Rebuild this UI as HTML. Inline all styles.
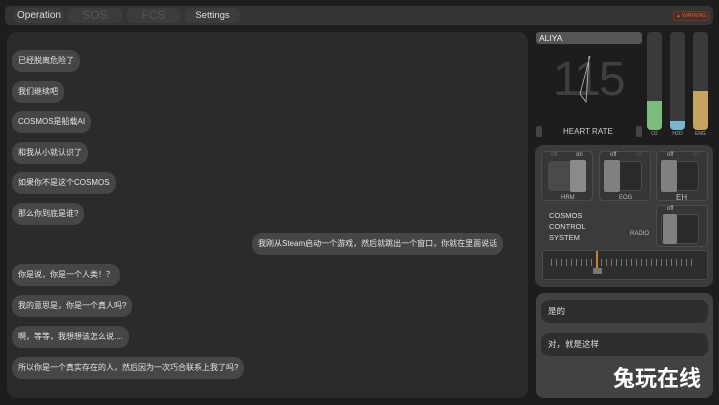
<!DOCTYPE html>
<html><head><meta charset="utf-8"><style>
*{margin:0;padding:0;box-sizing:border-box}
body{width:719px;height:405px;background:#1d1d1d;position:relative;overflow:hidden;font-family:"Liberation Sans","Noto Sans CJK SC",sans-serif;color:#ddd}
.a{position:absolute}
.tab{position:absolute;top:8px;height:15px;border-radius:5px;background:#3c3c3c;font-size:10px;line-height:15px;text-align:center}
.b{position:absolute;left:12px;height:22px;border-radius:10px;background:#464646;font-size:8px;line-height:22px;padding:0 6px;color:#e6e6e6;white-space:nowrap}
.bar{position:absolute;top:32px;width:15px;height:98px;border-radius:4px;background:#3a3a3a;overflow:hidden}
.lbl{position:absolute;top:131px;font-size:5px;color:#aaa;width:15px;text-align:center}
.sw{position:absolute;background:#2a2a2a;border-radius:4px;border:1px solid #4a4a4a}
.sm{position:absolute;font-size:6px;color:#bbb}
</style></head><body>
<div class="a" style="left:5px;top:6px;width:708px;height:19px;background:#343434;border-radius:5px"></div>
<div class="tab" style="left:14px;width:50px;color:#ddd;line-height:16px">Operation</div>
<div class="tab" style="left:68px;width:54px;color:#555;font-size:12px">SOS</div>
<div class="tab" style="left:127px;width:53px;color:#555;font-size:12px">FCS</div>
<div class="tab" style="left:185px;width:55px;color:#ddd;font-size:9.5px;line-height:16px">Settings</div>
<div class="a" style="left:673px;top:11px;width:36px;height:10px;border:1px solid #6a3a2a;border-radius:2px;background:#4a2e26;color:#d0603c;font-size:5px;line-height:8px;text-align:center">▲ WARNING</div>

<div class="a" style="left:7px;top:32px;width:521px;height:366px;background:#2b2b2b;border-radius:10px"></div>
<div class="b" style="top:50px">已经脱离危险了</div>
<div class="b" style="top:81px">我们继续吧</div>
<div class="b" style="top:111px">COSMOS是船载AI</div>
<div class="b" style="top:142px">和我从小就认识了</div>
<div class="b" style="top:172px">如果你不是这个COSMOS</div>
<div class="b" style="top:203px">那么你到底是谁?</div>
<div class="b" style="top:233px;left:252px">我刚从Steam启动一个游戏，然后就跳出一个窗口，你就在里面说话</div>
<div class="b" style="top:264px">你是说，你是一个人类！？</div>
<div class="b" style="top:295px">我的意思是，你是一个真人吗?</div>
<div class="b" style="top:326px">啊，等等，我想想该怎么说....</div>
<div class="b" style="top:357px">所以你是一个真实存在的人，然后因为一次巧合联系上我了吗?</div>

<div class="a" style="left:536px;top:32px;width:106px;height:12px;background:#555;border-radius:3px;font-size:8.5px;line-height:12px;padding-left:3px;color:#eee">ALIYA</div>
<div class="a" style="left:553px;top:52px;font-size:48px;color:#3f3f3f;letter-spacing:-2px">115</div>
<svg class="a" style="left:578px;top:54px" width="14" height="50"><path d="M12 2 L2 40 L8 48 L11 2" stroke="#bbb" fill="none" stroke-width="0.8"/></svg>
<div class="a" style="left:536px;top:126px;width:6px;height:11px;background:#444;border-radius:2px"></div>
<div class="a" style="left:636px;top:126px;width:6px;height:11px;background:#444;border-radius:2px"></div>
<div class="a" style="left:563px;top:127px;font-size:8px;color:#ccc">HEART RATE</div>
<div class="bar" style="left:647px"><div class="a" style="left:0;bottom:0;width:15px;height:29px;background:#7dbb7d"></div></div>
<div class="bar" style="left:670px"><div class="a" style="left:0;bottom:0;width:15px;height:9px;background:#79b5cc"></div></div>
<div class="bar" style="left:693px"><div class="a" style="left:0;bottom:0;width:15px;height:39px;background:#c6a35e"></div></div>
<div class="lbl" style="left:647px">O2</div><div class="lbl" style="left:670px">H2O</div><div class="lbl" style="left:693px">ENG</div>

<div class="a" style="left:535px;top:145px;width:178px;height:142px;background:#3b3b3b;border-radius:8px"></div>
<div class="a" style="left:541px;top:151px;width:52px;height:50px;border:1px solid #4c4c4c;border-radius:4px;background:#363636"></div>
<div class="a" style="left:599px;top:151px;width:52px;height:50px;border:1px solid #4c4c4c;border-radius:4px;background:#363636"></div>
<div class="a" style="left:656px;top:151px;width:52px;height:50px;border:1px solid #4c4c4c;border-radius:4px;background:#363636"></div>
<div class="sm" style="left:551px;top:152px;color:#666">off</div><div class="sm" style="left:576px;top:152px">on</div>
<div class="sm" style="left:610px;top:152px">off</div><div class="sm" style="left:636px;top:152px;color:#555">on</div>
<div class="sm" style="left:667px;top:152px">off</div><div class="sm" style="left:693px;top:152px;color:#555">on</div>
<div class="sw" style="left:548px;top:161px;width:38px;height:30px;background:#4a4a4a"></div>
<div class="a" style="left:570px;top:160px;width:16px;height:32px;background:#8a8a8a;border-radius:2px"></div>
<div class="sw" style="left:604px;top:161px;width:38px;height:30px"></div>
<div class="a" style="left:604px;top:160px;width:16px;height:32px;background:#808080;border-radius:2px"></div>
<div class="sw" style="left:661px;top:161px;width:38px;height:30px"></div>
<div class="a" style="left:661px;top:160px;width:16px;height:32px;background:#808080;border-radius:2px"></div>
<div class="sm" style="left:561px;top:195px">HRM</div><div class="sm" style="left:619px;top:195px">EOG</div><div class="sm" style="left:676px;top:193px;font-size:8px">EH</div>
<div class="a" style="left:549px;top:210px;font-size:7.5px;line-height:11px;color:#ddd">COSMOS<br>CONTROL<br>SYSTEM</div>
<div class="sm" style="left:630px;top:231px">RADIO</div>
<div class="a" style="left:656px;top:205px;width:52px;height:42px;border:1px solid #4c4c4c;border-radius:4px;background:#363636"></div>
<div class="sm" style="left:667px;top:206px">off</div>
<div class="sw" style="left:661px;top:214px;width:38px;height:30px"></div>
<div class="a" style="left:663px;top:214px;width:14px;height:30px;background:#808080;border-radius:2px"></div>
<div class="a" style="left:542px;top:250px;width:166px;height:30px;border:1px solid #4a4a4a;border-radius:3px;background:#2d2d2d"></div>
<div class="a" style="left:551px;top:259px;width:144px;height:7px;background:repeating-linear-gradient(90deg,#777 0 1px,transparent 1px 5px)"></div>
<div class="a" style="left:596px;top:251px;width:2px;height:22px;background:#c7812c"></div>
<div class="a" style="left:593px;top:268px;width:9px;height:6px;background:#777"></div>

<div class="a" style="left:536px;top:293px;width:177px;height:105px;background:#424242;border-radius:8px"></div>
<div class="a" style="left:541px;top:300px;width:167px;height:23px;background:#2e2e2e;border-radius:8px;font-size:8.5px;line-height:23px;padding-left:7px">是的</div>
<div class="a" style="left:541px;top:333px;width:167px;height:23px;background:#2e2e2e;border-radius:8px;font-size:8.5px;line-height:23px;padding-left:7px">对，就是这样</div>
<div class="a" style="left:613px;top:362px;font-size:22px;font-weight:bold;color:#fff;font-family:'Noto Sans CJK SC',sans-serif;line-height:30px">兔玩在线</div>
</body></html>
